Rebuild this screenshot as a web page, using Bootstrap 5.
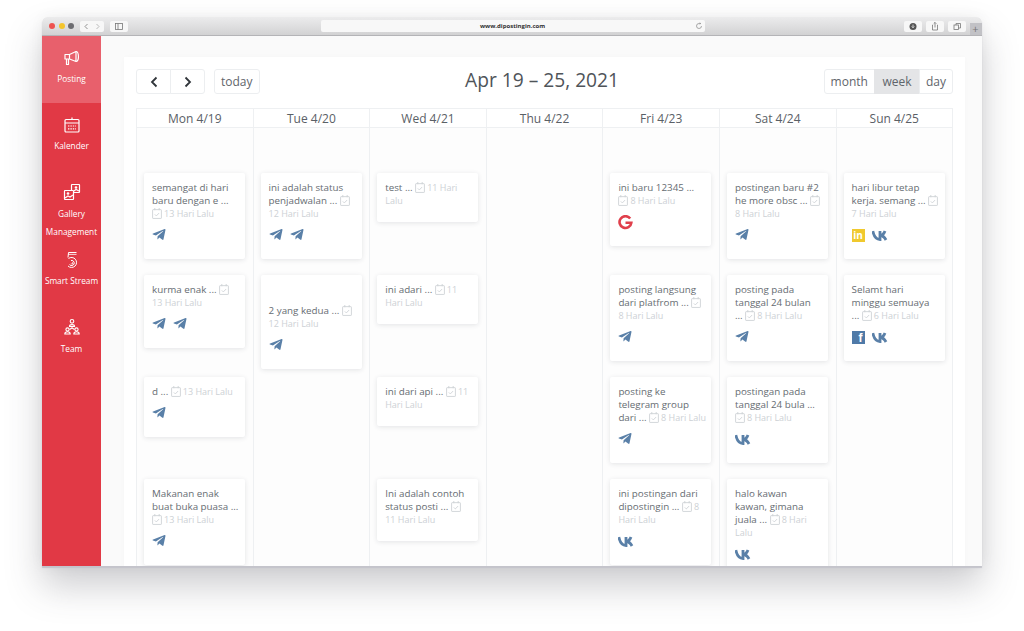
<!DOCTYPE html>
<html>
<head>
  <title>Dipostingin Calendar</title>
  <link rel="stylesheet" href="https://cdn.jsdelivr.net/npm/bootstrap@5.3.0/dist/css/bootstrap.min.css">
  <style>
    body { height: 631px; background: #fff; overflow: hidden; font-family: "Open Sans", "Liberation Sans", sans-serif; color: #5f656b; }
    .app-window { height: 549px; margin: 17px 42px 0; border-radius: 5px 5px 0 0; box-shadow: 0 2px 1px #c4c4cb, 0 20px 36px rgba(60,60,75,.26), 0 0 14px rgba(0,0,0,.05); }
    .title-bar { height: 19px; background: linear-gradient(#ececed, #d2d2d3); border-bottom: 1px solid #b4b4b7; border-radius: 5px 5px 0 0; padding-left: 7px; }
    .tl-dot { width: 6px; height: 6px; border-radius: 50%; margin-right: 3.5px; }
    .tb-btn { height: 11px; background: #f7f7f7; border-radius: 2px; color: #777; }
    .tb-btn svg { display: block; }
    .nav-pair { margin-left: 2px; }
    .side-toggle { margin-left: 6px; }
    .url-bar { width: 384px; height: 12px; background: #f8f8f8; border-radius: 2px; font-size: 6px; font-weight: 700; color: #333; line-height: 12px; position: relative; text-align: center; margin-left: 193px; margin-right: 199px; }
    .url-bar svg { position: absolute; right: 2px; top: 2px; }
    .new-tab { width: 12px; height: 12px; background: #c2c2c6; color: #777; font-size: 11px; line-height: 12px; text-align: center; margin-left: 4px; align-self: flex-end; }
    .side-bar { width: 59px; background: #e13945; color: #fff; flex-shrink: 0; }
    .side-item { height: 67.4px; padding-top: 12.5px; text-align: center; font-size: 8.3px; line-height: 18px; white-space: nowrap; }
    .side-item svg { display: block; margin: 0 auto 3.5px; }
    .side-item.is-active { background: #e8606c; }
    .main-area { background: #fafafa; padding: 21px 17px 0 23px; min-width: 0; }
    .cal-panel { height: 600px; background: #fff; padding: 12px 12px 0; box-shadow: 0 0 6px rgba(0,0,0,.02); }
    .cal-btn { font-size: 12px; line-height: 23px; height: 25px; padding: 0 6px; color: #5f656b; border: 1px solid #eceef0; background: #fff; border-radius: 3px; }
    .cal-btn:hover { color: #5f656b; }
    .cal-btn.is-on { background: #e4e5e7; border-color: #e4e5e7; padding: 0 7.5px; }
    .cal-btn svg { display: block; }
    .arrow-btn { width: 35px; display: flex; align-items: center; justify-content: center; padding: 0; }
    .today-btn { margin-left: 1px; }
    .cal-title { font-size: 19.2px; color: #4f5459; margin: 0 0 3px 1px; font-weight: 400; line-height: 22px; }
    .cal-grid { display: grid; grid-template-columns: repeat(6, 116.6px) minmax(0, 1fr); margin-top: 14px; }
    .day-head { height: 20px; line-height: 19px; font-size: 12px; text-align: center; color: #5a6066; border-top: 1px solid #eef0f2; border-bottom: 1px solid #eef0f2; border-left: 1px solid #eef0f2; }
    .day-col { background: #fdfdfd; padding-top: 45px; height: 500px; border-left: 1px solid #eef0f2; }
    .day-head.is-last, .day-col.is-last { border-right: 1px solid #eef0f2; }
    .day-slot { height: 102px; padding: 0 8px 0 7px; }
    .post-card { width: 101px; background: #fff; border-radius: 2px; box-shadow: 0 1px 5px rgba(30,40,60,.12); padding: 8px 4px 17px 8px; font-size: 9.8px; line-height: 13px; color: #666c72; white-space: nowrap; }
    .post-card.has-gap { padding-top: 29px; }
    .post-card.no-icons { padding-bottom: 15px; }
    .post-date { color: #cdd1d5; font-size: 9px; }
    .cal-mini { vertical-align: -1.5px; margin-right: 2px; }
    .post-icons { display: flex; gap: 7px; align-items: center; height: 13px; margin-top: 9px; }
    .in-logo { width: 13px; height: 13px; background: #f0c92e; color: #fff; font-weight: 700; font-size: 10px; line-height: 13px; text-align: center; }
    .fb-logo { width: 13px; height: 13px; background: #4f7aa8; color: #fff; font-weight: 700; font-size: 12px; line-height: 14px; text-align: right; padding-right: 2px; font-family: "Liberation Sans", sans-serif; }
  </style>
</head>
<body>
  <div class="app-window d-flex flex-column overflow-hidden">
    <div class="title-bar d-flex align-items-center flex-shrink-0">
      <span class="tl-dot" style="background:#ee5350"></span>
      <span class="tl-dot" style="background:#f4c52c"></span>
      <span class="tl-dot" style="background:#6c6c70"></span>
      <span class="tb-btn d-flex nav-pair">
        <svg width="12" height="11" viewBox="0 0 12 11" fill="none" stroke="#777" stroke-width=".8"><path d="M7.5 3 5 5.5 7.5 8"/></svg>
        <svg width="12" height="11" viewBox="0 0 12 11" fill="none" stroke="#aaa" stroke-width=".8"><path d="M4.500 3 7 5.500 4.500 8"/></svg>
      </span>
      <span class="tb-btn side-toggle">
        <svg width="18" height="11" viewBox="0 0 18 11" fill="none" stroke="#777" stroke-width=".8"><rect x="5.500" y="2.500" width="7" height="6"/><path d="M8 2.500v6"/></svg>
      </span>
      <div class="url-bar">www.dipostingin.com
        <svg width="8" height="8" viewBox="0 0 8 8" fill="none" stroke="#888" stroke-width=".7"><path d="M6.500 4A2.500 2.500 0 1 1 4 1.500h1.500M4.700.6l1 .9-1 .9"/></svg>
      </div>
      <span class="tb-btn">
        <svg width="18" height="11" viewBox="0 0 18 11"><circle cx="9" cy="5.500" r="3.500" fill="#555"/><path d="M9 3.500v3M7.700 5.400 9 6.800l1.300-1.400" fill="none" stroke="#fff" stroke-width=".7"/></svg>
      </span>
      <span class="tb-btn ms-1">
        <svg width="18" height="11" viewBox="0 0 18 11" fill="none" stroke="#777" stroke-width=".8"><path d="M7 4H6.500v5h5V4H11M9 6.500V1.500M7.700 2.700 9 1.400l1.300 1.300"/></svg>
      </span>
      <span class="tb-btn ms-1">
        <svg width="18" height="11" viewBox="0 0 18 11" fill="none" stroke="#777" stroke-width=".8"><rect x="6" y="4" width="4.500" height="4.500"/><path d="M8 4V2.500h4.500V7h-2"/></svg>
      </span>
      <span class="new-tab">+</span>
    </div>

    <div class="d-flex flex-grow-1 overflow-hidden">
      <nav class="side-bar">
        <div class="side-item is-active">
          <svg width="18" height="18" viewBox="0 0 18 18" fill="none" stroke="#fff" stroke-width="1.2" stroke-linejoin="round"><path d="M2 5.500h4.500L13 2.500v10L6.500 10H2z"/><path d="M6.500 5.500V10M13 2.500c3 0 3.500 10 0 10"/><path d="M3.500 10v5.500h2V10"/></svg>
          Posting
        </div>
        <div class="side-item">
          <svg width="18" height="18" viewBox="0 0 18 18" fill="none" stroke="#fff" stroke-width="1.2"><rect x="2" y="3.500" width="14" height="12.500" rx="1"/><path d="M2 7h14M9 1.500v2"/><path d="M5 10h8M5 12.800h8" stroke-dasharray="1.400 1"/></svg>
          Kalender
        </div>
        <div class="side-item">
          <svg width="18" height="18" viewBox="0 0 18 18" fill="none" stroke="#fff" stroke-width="1.200"><rect x="8.500" y="1.500" width="8" height="8" rx=".5"/><rect x="1.500" y="7.500" width="9" height="9" rx=".5" fill="#e13945"/><circle cx="5" cy="10.500" r="1.300" fill="#fff" stroke="none"/><circle cx="13" cy="4.500" r="1.300" fill="#fff" stroke="none"/><path d="M2 15l3-2 2 1 3-2M11 8l2-1.500 3 1.500"/></svg>
          Gallery<br>Management
        </div>
        <div class="side-item">
          <svg width="18" height="18" viewBox="0 0 18 18" fill="none" stroke="#fff" stroke-width="1"><path d="M13.500 1.500h-8l-.5 5"/><path d="M5 3.400h8.500" stroke-width=".8"/><path d="M5.500 7.500A5 5 0 1 1 5 15"/><path d="M8 9.500a2.600 2.600 0 1 1-1.500 4M9.300 11.500a.8.8 0 1 1-1 1"/></svg>
          Smart Stream
        </div>
        <div class="side-item">
          <svg width="18" height="18" viewBox="0 0 18 18" fill="none" stroke="#fff" stroke-width="1.100"><circle cx="9" cy="3.300" r="1.800"/><path d="M6.500 8.500c0-2.500 5-2.500 5 0zM9 8.500v2M6.500 11.500 9 10l2.500 1.500"/><circle cx="4.500" cy="11.500" r="1.600"/><circle cx="13.500" cy="11.500" r="1.600"/><path d="M1.800 16c0-3 5.400-3 5.400 0zM10.800 16c0-3 5.400-3 5.400 0z"/></svg>
          Team
        </div>
      </nav>

      <div class="main-area flex-grow-1">
        <div class="cal-panel">
          <div class="d-flex justify-content-between align-items-center">
            <div class="d-flex gap-2">
              <div class="btn-group">
                <button class="btn cal-btn arrow-btn"><svg width="10" height="12" viewBox="0 0 10 12" fill="none" stroke="#30353a" stroke-width="1.800"><path d="M7.500 1.500 3 6l4.500 4.500"/></svg></button>
                <button class="btn cal-btn arrow-btn"><svg width="10" height="12" viewBox="0 0 10 12" fill="none" stroke="#30353a" stroke-width="1.800"><path d="M2.500 1.500 7 6l-4.500 4.500"/></svg></button>
              </div>
              <button class="btn cal-btn today-btn">today</button>
            </div>
            <h2 class="cal-title">Apr 19 – 25, 2021</h2>
            <div class="btn-group">
              <button class="btn cal-btn">month</button>
              <button class="btn cal-btn is-on">week</button>
              <button class="btn cal-btn">day</button>
            </div>
          </div>
          <div class="cal-grid" id="calGrid"></div>
        </div>
      </div>
    </div>
  </div>

  <script src="https://cdn.jsdelivr.net/npm/bootstrap@5.3.0/dist/js/bootstrap.bundle.min.js"></script>
  <script>
    const cal = `<svg class="cal-mini" width="10" height="11" viewBox="0 0 9 10" fill="none" stroke="#cdd1d5" stroke-width=".8"><rect x=".5" y="1.500" width="8" height="8" rx=".5"/><path d="M2.500 0v2M6.500 0v2M2.500 5.800l1.400 1.400 2.500-2.600"/></svg>`;
    const d = t => `<span class="post-date">${t}</span>`;

    const tg = `<svg width="14" height="13" viewBox="0 0 448 448" fill="#5a80a8"><path d="M446.700 34.600l-67.600 318.800c-5.100 22.500-18.400 28.100-37.300 17.500l-103-75.900-49.700 47.800c-5.500 5.500-10.100 10.100-20.700 10.100l7.400-104.900 190.900-172.500c8.300-7.400-1.800-11.500-12.900-4.100L117.800 220 16.200 188.200c-22.100-6.900-22.500-22.100 4.600-32.700L418.200 2.400c18.400-6.900 34.500 4.100 28.500 32.200z"/></svg>`;
    const vk = `<svg width="16" height="11" viewBox="0 0 16 11" fill="none" stroke="#5a80a8" stroke-width="2.800"><path d="M.8 1c1 5 3.500 8.500 7.200 8.500V1"/><path d="M8 5.500c2.500-.2 4-1.800 5-4.500M8 5.500c2.500 0 4.500 1.500 6 4.500"/></svg>`;
    const gg = `<svg width="15" height="15" viewBox="0 0 16 16" fill="none" stroke="#e0404c" stroke-width="2.800"><path d="M13 3.800A6.300 6.300 0 1 0 14.200 8.300H8"/></svg>`;
    const li = `<span class="in-logo">in</span>`;
    const fb = `<span class="fb-logo">f</span>`;

    const days = [
      { name: 'Mon 4/19', posts: [
        { html: `semangat di hari<br>baru dengan e ...<br>${cal}${d('13 Hari Lalu')}`, icons: [tg] },
        { html: `kurma enak ... ${cal}<br>${d('13 Hari Lalu')}`, icons: [tg, tg] },
        { html: `d ... ${cal}${d('13 Hari Lalu')}`, icons: [tg] },
        { html: `Makanan enak<br>buat buka puasa ...<br>${cal}${d('13 Hari Lalu')}`, icons: [tg] }
      ] },
      { name: 'Tue 4/20', posts: [
        { html: `ini adalah status<br>penjadwalan ... ${cal}<br>${d('12 Hari Lalu')}`, icons: [tg, tg] },
        { html: `2 yang kedua ... ${cal}<br>${d('12 Hari Lalu')}`, icons: [tg], gap: true }
      ] },
      { name: 'Wed 4/21', posts: [
        { html: `test ... ${cal}${d('11 Hari')}<br>${d('Lalu')}`, icons: [] },
        { html: `ini adari ... ${cal}${d('11')}<br>${d('Hari Lalu')}`, icons: [] },
        { html: `ini dari api ... ${cal}${d('11')}<br>${d('Hari Lalu')}`, icons: [] },
        { html: `Ini adalah contoh<br>status posti ... ${cal}<br>${d('11 Hari Lalu')}`, icons: [] }
      ] },
      { name: 'Thu 4/22', posts: [] },
      { name: 'Fri 4/23', posts: [
        { html: `ini baru 12345 ...<br>${cal}${d('8 Hari Lalu')}`, icons: [gg] },
        { html: `posting langsung<br>dari platfrom ... ${cal}<br>${d('8 Hari Lalu')}`, icons: [tg] },
        { html: `posting ke<br>telegram group<br>dari ... ${cal}${d('8 Hari Lalu')}`, icons: [tg] },
        { html: `ini postingan dari<br>dipostingin ... ${cal}${d('8')}<br>${d('Hari Lalu')}`, icons: [vk] }
      ] },
      { name: 'Sat 4/24', posts: [
        { html: `postingan baru #2<br>he more obsc ... ${cal}<br>${d('8 Hari Lalu')}`, icons: [tg] },
        { html: `posting pada<br>tanggal 24 bulan<br>... ${cal}${d('8 Hari Lalu')}`, icons: [tg] },
        { html: `postingan pada<br>tanggal 24 bula ...<br>${cal}${d('8 Hari Lalu')}`, icons: [vk] },
        { html: `halo kawan<br>kawan, gimana<br>juala ... ${cal}${d('8 Hari')}<br>${d('Lalu')}`, icons: [vk] }
      ] },
      { name: 'Sun 4/25', posts: [
        { html: `hari libur tetap<br>kerja. semang ... ${cal}<br>${d('7 Hari Lalu')}`, icons: [li, vk] },
        { html: `Selamt hari<br>minggu semuaya<br>... ${cal}${d('6 Hari Lalu')}`, icons: [fb, vk] }
      ] }
    ];

    const grid = document.getElementById('calGrid');
    grid.innerHTML =
      days.map((day, i) => `<div class="day-head ${i === 6 ? 'is-last' : ''}">${day.name}</div>`).join('') +
      days.map((day, i) => `
        <div class="day-col ${i === 6 ? 'is-last' : ''}">
          ${day.posts.map(post => `
            <div class="day-slot">
              <div class="post-card ${post.gap ? 'has-gap' : ''} ${post.icons.length ? '' : 'no-icons'}">
                ${post.html}
                ${post.icons.length ? `<div class="post-icons">${post.icons.join('')}</div>` : ''}
              </div>
            </div>`).join('')}
        </div>`).join('');
  </script>
</body>
</html>
